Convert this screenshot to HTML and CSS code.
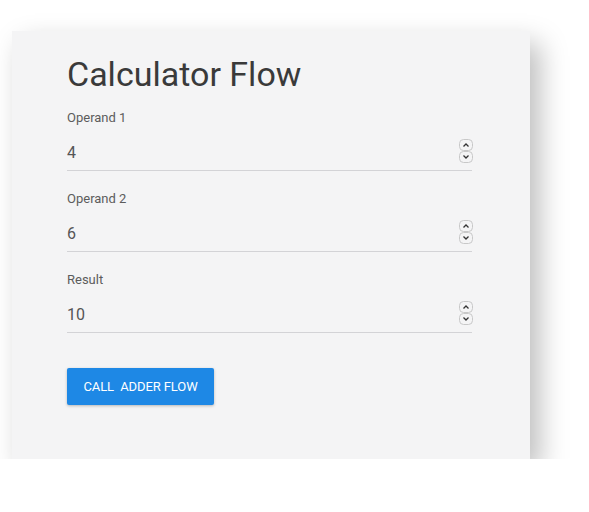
FILE: index.html
```html
<!DOCTYPE html>
<html>
<head>
<meta charset="utf-8">
<link rel="stylesheet" href="styles.css">
</head>
<body>
<div class="card">
  <h1 class="title">Calculator Flow</h1>
  <div class="field">
    <div class="label">Operand 1</div>
    <div class="input"><span class="value">4</span>
      <svg class="spin" width="14" height="24" viewBox="0 0 14 24"><rect x="0.5" y="0.5" width="13" height="11" rx="4" fill="none" stroke="#c8c8c8"/><rect x="0.5" y="12.5" width="13" height="11" rx="4" fill="none" stroke="#c8c8c8"/><path d="M4.5 7.5 L7 5 L9.5 7.5" fill="none" stroke="#333" stroke-width="1.3"/><path d="M4.5 16.5 L7 19 L9.5 16.5" fill="none" stroke="#333" stroke-width="1.3"/></svg>
    </div>
  </div>
  <div class="field">
    <div class="label">Operand 2</div>
    <div class="input"><span class="value">6</span>
      <svg class="spin" width="14" height="24" viewBox="0 0 14 24"><rect x="0.5" y="0.5" width="13" height="11" rx="4" fill="none" stroke="#c8c8c8"/><rect x="0.5" y="12.5" width="13" height="11" rx="4" fill="none" stroke="#c8c8c8"/><path d="M4.5 7.5 L7 5 L9.5 7.5" fill="none" stroke="#333" stroke-width="1.3"/><path d="M4.5 16.5 L7 19 L9.5 16.5" fill="none" stroke="#333" stroke-width="1.3"/></svg>
    </div>
  </div>
  <div class="field">
    <div class="label">Result</div>
    <div class="input"><span class="value">10</span>
      <svg class="spin" width="14" height="24" viewBox="0 0 14 24"><rect x="0.5" y="0.5" width="13" height="11" rx="4" fill="none" stroke="#c8c8c8"/><rect x="0.5" y="12.5" width="13" height="11" rx="4" fill="none" stroke="#c8c8c8"/><path d="M4.5 7.5 L7 5 L9.5 7.5" fill="none" stroke="#333" stroke-width="1.3"/><path d="M4.5 16.5 L7 19 L9.5 16.5" fill="none" stroke="#333" stroke-width="1.3"/></svg>
    </div>
  </div>
  <button class="btn">CALL&nbsp; ADDER FLOW</button>
</div>
</body>
</html>
```
FILE: styles.css
```css
html, body {
  margin: 0;
  padding: 0;
  background: #ffffff;
}
body {
  padding: 31px 0 0 12px;
  font-family: Roboto, "Liberation Sans", sans-serif;
}
.card {
  width: 518px;
  height: 428px;
  box-sizing: border-box;
  background: #f4f4f5;
  box-shadow: 10px 12px 26px rgba(0, 0, 0, 0.26);
  padding: 23px 58px 0 55px;
  display: flex;
  flex-direction: column;
}
.title {
  margin: 0;
  font-size: 34px;
  font-weight: 400;
  line-height: 40px;
  color: #3a3a3a;
}
.field {
  display: flex;
  flex-direction: column;
}
.field:first-of-type {
  margin-top: 16px;
}
.label {
  font-size: 13px;
  line-height: 16px;
  color: #5c5c5c;
}
.input {
  display: flex;
  align-items: center;
  justify-content: space-between;
  height: 36px;
  margin-top: 8px;
  border-bottom: 1px solid #d3d3d6;
  margin-bottom: 20px;
}
.value {
  font-size: 16px;
  color: #555;
}
.spin {
  display: block;
  margin-bottom: 2px;
  margin-right: -1px;
}
.btn {
  align-self: flex-start;
  margin-top: 15px;
  width: 147px;
  height: 37px;
  border: none;
  border-radius: 2px;
  background: #1e88e5;
  color: #ffffff;
  font-family: Roboto, "Liberation Sans", sans-serif;
  font-size: 13px;
  letter-spacing: -0.1px;
  box-shadow: 0 1px 3px rgba(0, 0, 0, 0.25);
  padding: 0;
}
```
